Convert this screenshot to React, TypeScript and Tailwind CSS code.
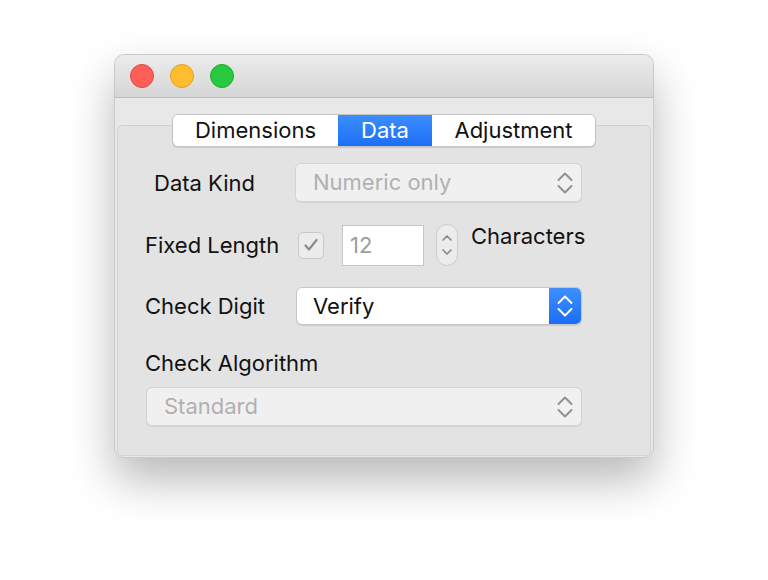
import React from "react";

const font = { fontFamily: "Inter, 'Liberation Sans', sans-serif" };

function UpDown({ color, size = "big" }: { color: string; size?: "big" | "small" }) {
  if (size === "small") {
    return (
      <svg width="12" height="30" viewBox="0 0 12 30" fill="none">
        <path d="M2 10 L6 6 L10 10" stroke={color} strokeWidth="1.7" strokeLinecap="round" strokeLinejoin="round" />
        <path d="M2 20 L6 24 L10 20" stroke={color} strokeWidth="1.7" strokeLinecap="round" strokeLinejoin="round" />
      </svg>
    );
  }
  return (
    <svg width="16" height="24" viewBox="0 0 16 24" fill="none">
      <path d="M1.5 9 L8 2.5 L14.5 9" stroke={color} strokeWidth="1.9" strokeLinecap="round" strokeLinejoin="round" />
      <path d="M1.5 15 L8 21.5 L14.5 15" stroke={color} strokeWidth="1.9" strokeLinecap="round" strokeLinejoin="round" />
    </svg>
  );
}

function DisabledPopup({ label, width }: { label: string; width: string }) {
  return (
    <div
      className={`${width} h-[39px] flex items-center justify-between pl-[17px] pr-[8px] rounded-[6px] border border-[#d3d3d3] bg-[#f0f0f0] text-[#b1b1b1] shadow-[0_1px_1px_rgba(0,0,0,0.06)]`}
    >
      <span>{label}</span>
      <UpDown color="#8f8f8f" />
    </div>
  );
}

export default function App() {
  const labelCls = "text-[22px] leading-6 text-[#111111]";

  return (
    <div className="min-h-screen bg-white flex justify-center pt-[54px]" style={font}>
      <div className="w-[540px] h-[404px] rounded-[10px] border border-[#c9c9c9] bg-[#e8e8e8] shadow-[0_22px_45px_rgba(0,0,0,0.28)] flex flex-col overflow-hidden">
        {/* title bar */}
        <div className="h-[43px] shrink-0 flex items-center gap-4 pl-[15px] bg-gradient-to-b from-[#ececec] to-[#d6d6d6] border-b border-[#bdbdbd]">
          <div className="w-6 h-6 rounded-full bg-[#fe5f57] border border-[#e1463f]" />
          <div className="w-6 h-6 rounded-full bg-[#febc2e] border border-[#dfa023]" />
          <div className="w-6 h-6 rounded-full bg-[#28c840] border border-[#1dab2f]" />
        </div>

        {/* content */}
        <div className="flex-1 flex flex-col px-[2px] pt-[27px] pb-[1px]">
          <div className="flex-1 flex flex-col rounded-[6px] border border-[#d0d0d0] bg-[#e3e3e3] text-[22px]">
            {/* segmented control */}
            <div className="self-center -mt-[12px] flex h-[33px] rounded-[6px] border border-[#c4c4c4] bg-white shadow-[0_1px_1px_rgba(0,0,0,0.12)] overflow-hidden text-[22px] text-[#111111]">
              <div className="w-[165px] flex items-center justify-center">Dimensions</div>
              <div className="w-[94px] flex items-center justify-center text-white bg-gradient-to-b from-[#3d8dfc] to-[#1b6ff6]">Data</div>
              <div className="w-[163px] flex items-center justify-center">Adjustment</div>
            </div>

            {/* Data Kind */}
            <div className="mt-[16px] flex items-center pl-[27px]">
              <div className={`w-[150px] pl-[9px] ${labelCls}`}>Data Kind</div>
              <DisabledPopup label="Numeric only" width="w-[287px]" />
            </div>

            {/* Fixed Length */}
            <div className="mt-[22px] flex items-center pl-[27px] h-[42px]">
              <div className={`w-[150px] ${labelCls}`}>Fixed Length</div>
              <div className="ml-[3px] w-[26px] h-[27px] rounded-[5px] border border-[#c9c9c9] bg-[#ececec] flex items-center justify-center">
                <svg width="16" height="14" viewBox="0 0 16 14" fill="none">
                  <path d="M2.5 7.5 L6 11.5 L13.5 2" stroke="#8b8b8b" strokeWidth="2.2" strokeLinecap="round" strokeLinejoin="round" />
                </svg>
              </div>
              <div className="ml-[18px] w-[82px] h-[41px] border border-[#c6c6c6] bg-white flex items-center pl-[7px] text-[#9c9c9c]">
                12
              </div>
              <div className="ml-[12px] w-[22px] h-[42px] rounded-full border border-[#cdcdcd] bg-[#ececec] flex items-center justify-center">
                <UpDown color="#8a8a8a" size="small" />
              </div>
              <div className={`ml-[13px] self-start ${labelCls}`}>Characters</div>
            </div>

            {/* Check Digit */}
            <div className="mt-[21px] flex items-center pl-[27px]">
              <div className={`w-[151px] ${labelCls}`}>Check Digit</div>
              <div className="w-[286px] h-[38px] flex rounded-[6px] bg-white border border-[#c8c8c8] shadow-[0_1px_1px_rgba(0,0,0,0.1)] overflow-hidden">
                <div className="flex-1 flex items-center pl-[16px] text-[#111111]">Verify</div>
                <div className="w-[32px] flex items-center justify-center bg-gradient-to-b from-[#3f8ffc] to-[#1a6ef6]">
                  <UpDown color="#ffffff" />
                </div>
              </div>
            </div>

            {/* Check Algorithm */}
            <div className={`mt-[26px] pl-[27px] ${labelCls}`}>Check Algorithm</div>
            <div className="mt-[12px] pl-[28px]">
              <DisabledPopup label="Standard" width="w-[436px]" />
            </div>
          </div>
        </div>
      </div>
    </div>
  );
}
